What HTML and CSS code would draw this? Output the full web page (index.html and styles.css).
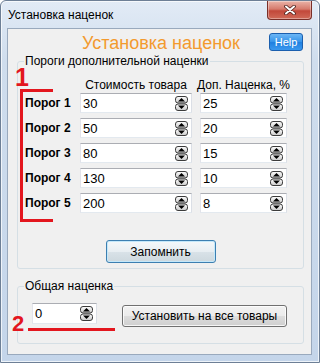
FILE: index.html
```html
<!DOCTYPE html>
<html lang="ru">
  <head>
    <meta charset="UTF-8" />
    <title>Установка наценок</title>
    <link rel="stylesheet" href="styles.css">
  </head>
  <body>
    <div class="window">
      <div class="titlebar">
        <span class="title">Установка наценок</span>
        <button class="close" aria-label="Закрыть">
          <svg width="12" height="10" viewBox="0 0 12 10">
            <path d="M2 1.5 L10 8.5 M10 1.5 L2 8.5" stroke="#4a1e1a" stroke-width="3.6" stroke-linecap="round" />
            <path d="M2 1.5 L10 8.5 M10 1.5 L2 8.5" stroke="#fff" stroke-width="2" stroke-linecap="round" />
          </svg>
        </button>
      </div>

      <div class="client">
        <div class="header">
          <span></span>
          <h1 class="caption">Установка наценок</h1>
          <button class="help">Help</button>
        </div>

        <fieldset class="group thresholds">
          <legend>Пороги дополнительной наценки</legend>
          <div class="grid heads">
            <span></span>
            <span>Стоимость товара</span>
            <span>Доп. Наценка, %</span>
          </div>
          <div class="grid rows" id="rows"></div>
          <div class="actions">
            <button class="btn default">Запомнить</button>
          </div>
        </fieldset>

        <fieldset class="group total">
          <legend>Общая наценка</legend>
          <div class="total-row">
            <div class="spinbox small">
              <input type="text" value="0" />
              <svg class="spin" width="13" height="15" viewBox="0 0 13 15"><use href="#spin" /></svg>
            </div>
            <button class="btn">Установить на все товары</button>
          </div>
        </fieldset>

        <!-- red annotations drawn over the dialog -->
        <span class="mark mark-1">1</span>
        <span class="bracket"></span>
        <span class="mark mark-2">2</span>
        <span class="underline"></span>
      </div>
    </div>

    <svg width="0" height="0" style="position: absolute">
      <defs>
        <linearGradient id="spinFill" x1="0" y1="0" x2="0" y2="1">
          <stop offset="0" stop-color="#ffffff" />
          <stop offset="1" stop-color="#c9c9c9" />
        </linearGradient>
        <g id="spin">
          <rect x="0.5" y="0.5" width="12" height="6.5" rx="2.5" fill="url(#spinFill)" stroke="#3c3c3c" />
          <rect x="0.5" y="8" width="12" height="6.5" rx="2.5" fill="url(#spinFill)" stroke="#3c3c3c" />
          <path d="M3 5.5 L6.5 2 L10 5.5 Z" fill="#000" />
          <path d="M3 9.5 L10 9.5 L6.5 13 Z" fill="#000" />
        </g>
      </defs>
    </svg>

    <script>
      const thresholds = [
        [30, 25],
        [50, 20],
        [80, 15],
        [130, 10],
        [200, 8],
      ];
      const rows = document.getElementById("rows");
      const spin =
        '<svg class="spin" width="13" height="15" viewBox="0 0 13 15"><use href="#spin" /></svg>';

      thresholds.forEach(([price, markup], i) => {
        rows.innerHTML += `
          <label class="level">Порог ${i + 1}</label>
          <div class="spinbox"><input type="text" value="${price}" />${spin}</div>
          <div class="spinbox"><input type="text" value="${markup}" />${spin}</div>
        `;
      });
    </script>
  </body>
</html>
```

FILE: styles.css
```css
body {
  margin: 0;
  font-family: "Liberation Sans", Arial, sans-serif;
  font-size: 12px;
  color: #000;
  background: #fff;
}
button {
  font-family: inherit;
}
.window {
  width: 320px;
  height: 363px;
  box-sizing: border-box;
  padding: 0 7px 7px 6px;
  display: flex;
  flex-direction: column;
  background: linear-gradient(#e2ebf6, #cfdded 60px, #c4d5ea);
  border: 1px solid #6d7f96;
  border-radius: 6px 6px 0 0;
  box-shadow: inset 0 0 0 1px rgba(255, 255, 255, 0.7);
}
.titlebar {
  height: 27px;
  display: flex;
  align-items: flex-start;
}
.title {
  margin: 7px 0 0 1px;
  line-height: 14px;
}
.close {
  margin-left: auto;
  width: 45px;
  height: 19px;
  padding: 0;
  display: flex;
  align-items: center;
  justify-content: center;
  border: 1px solid #7a2f28;
  border-top: 0;
  border-radius: 0 0 4px 4px;
  background: linear-gradient(#eab3a8, #d67a6c 45%, #c2483a 55%, #d06a58);
  box-shadow: inset 0 0 0 1px rgba(255, 255, 255, 0.35);
}
.client {
  position: relative;
  flex: 1;
  background: #f0f0f0;
  border: 1px solid #99a9bd;
}
.header {
  display: grid;
  grid-template-columns: 1fr auto 1fr;
  align-items: start;
  padding: 4px 8px 0 9px;
}
.caption {
  margin: 0 0 0 2px;
  font-size: 18px;
  font-weight: normal;
  line-height: 20px;
  color: #f39a2e;
}
.help {
  justify-self: end;
  width: 34px;
  height: 18px;
  padding: 0;
  font-size: 11px;
  color: #fff;
  border: 1px solid #1b5fae;
  border-radius: 3px;
  background: linear-gradient(#6cb6f5, #3593e9 50%, #1f7fe0 51%, #3a98ee);
}
.group {
  position: relative;
  width: 287px;
  box-sizing: border-box;
  margin: 1px 0 0 9px;
  padding: 0;
  border: 1px solid #d5dfe5;
  border-radius: 3px;
}
.group legend {
  margin-left: 6px;
  padding: 0 1px;
  line-height: 14px;
}
.grid {
  display: grid;
  grid-template-columns: 47px 112px 87px;
  column-gap: 8px;
  padding-left: 7px;
}
.heads {
  margin-top: 10px;
  line-height: 14px;
  white-space: nowrap;
}
.heads span {
  justify-self: center;
}
.rows {
  margin-top: 1px;
  row-gap: 5px;
  grid-auto-rows: 20px;
  align-items: center;
}
.level {
  font-weight: bold;
  white-space: nowrap;
}
.spinbox {
  height: 20px;
  box-sizing: border-box;
  display: flex;
  align-items: center;
  background: #fff;
  border: 1px solid;
  border-color: #abadb3 #dbdfe6 #e3e9ef #e2e3ea;
}
.spinbox input {
  flex: 1;
  min-width: 0;
  border: 0;
  padding: 0 0 0 2px;
  font-family: inherit;
  font-size: 13px;
  background: transparent;
}
.spin {
  margin-right: 3px;
  flex: none;
}
.actions {
  display: flex;
  justify-content: center;
  margin-top: 27px;
  padding-bottom: 5px;
}
.btn {
  height: 23px;
  padding: 0;
  font-size: 12px;
  color: #000;
  border: 1px solid #707070;
  border-radius: 3px;
  background: linear-gradient(#f2f2f2, #ebebeb 50%, #dddddd 51%, #cfcfcf);
  box-shadow: inset 0 0 0 1px rgba(255, 255, 255, 0.8);
}
.btn.default {
  width: 110px;
  border-color: #3c7fb1;
  box-shadow: inset 0 0 0 1px #c4e8fa;
  background: linear-gradient(#f4f8fa, #e8eef2 50%, #d9e2e8 51%, #cdd8de);
}
.total {
  margin-top: 10px;
}
.total-row {
  display: flex;
  align-items: flex-start;
  gap: 25px;
  padding: 10px 0 16px 14px;
}
.spinbox.small {
  width: 65px;
  height: 21px;
}
.total-row .btn {
  width: 165px;
  height: 22px;
  margin-top: 2px;
}
.mark {
  position: absolute;
  font-size: 25px;
  font-weight: bold;
  line-height: 1;
  color: #e3161e;
}
.mark-1 {
  left: 7px;
  top: 36px;
}
.mark-2 {
  left: 4px;
  top: 284px;
  font-size: 22px;
}
.bracket {
  position: absolute;
  left: 12px;
  top: 60px;
  width: 30px;
  height: 127px;
  border: 3px solid #e3161e;
  border-right: 0;
}
.underline {
  position: absolute;
  left: 20px;
  top: 299px;
  width: 87px;
  height: 3px;
  background: #e3161e;
}
```
